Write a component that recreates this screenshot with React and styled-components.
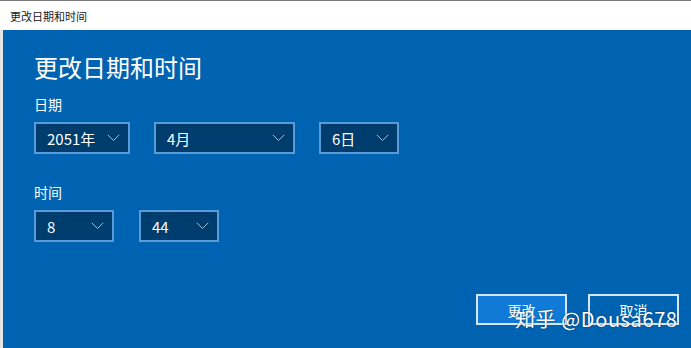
import styled, { createGlobalStyle } from "styled-components"

const GlobalStyle = createGlobalStyle`
    html, body {
        margin: 0;
        padding: 0;
        background: #ffffff;
    }
    body {
        font-family: "Noto Sans CJK SC", "Noto Sans", sans-serif;
    }
`

const Window = styled.div`
    width: 691px;
    height: 348px;
    display: flex;
    flex-direction: column;
    position: relative;
    overflow: hidden;
    border-top: 1px solid #7a7a7a;
    box-sizing: border-box;
`

const TitleBar = styled.div`
    height: 29px;
    display: flex;
    align-items: center;
    padding-left: 10px;
    font-size: 11px;
    color: #1a1a1a;
    background: #ffffff;
`

const Body = styled.div`
    flex: 1;
    display: flex;
    flex-direction: column;
    background: #0063b1;
    border-left: 3px solid #e6e6e6;
    padding: 21px 12px 23px 31px;
    color: #ffffff;
`

const Heading = styled.h1`
    margin: 0;
    font-size: 24px;
    font-weight: 400;
    line-height: 32px;
`

const Label = styled.div`
    font-size: 14px;
    line-height: 20px;
    margin-top: ${p => p.$top}px;
`

const Row = styled.div`
    display: flex;
    gap: ${p => p.$gap}px;
    margin-top: 8px;
`

const Select = styled.div`
    width: ${p => p.$w}px;
    height: 32px;
    box-sizing: border-box;
    border: 2px solid #5a9ad6;
    background: #003d6f;
    display: flex;
    align-items: center;
    justify-content: space-between;
    padding: 0 8px 0 11px;
    font-size: 15px;
    color: #ffffff;
`

const Chevron = () => (
    <svg width="13" height="8" viewBox="0 0 13 8" fill="none">
        <path d="M0.8 0.8 L6.5 6.5 L12.2 0.8" stroke="#9dbfe0" strokeWidth="1" />
    </svg>
)

const Buttons = styled.div`
    margin-top: auto;
    display: flex;
    justify-content: flex-end;
    gap: 21px;
`

const Button = styled.button`
    width: 91px;
    height: 31px;
    box-sizing: border-box;
    border: 2px solid #d4e6f7;
    background: ${p => (p.$primary ? "#117ad6" : "#0063b1")};
    color: #ffffff;
    font-family: inherit;
    font-size: 14px;
    padding: 0;
`

const Watermark = styled.div`
    position: absolute;
    left: 515px;
    top: 303px;
    font-family: "Noto Sans CJK SC", "Noto Sans", sans-serif;
    font-size: 20px;
    color: #ffffff;
    text-shadow: 0 0 2px rgba(0, 0, 0, 0.55);
    letter-spacing: 0.6px;
    white-space: nowrap;
`

const Dropdown = ({ w, value }) => (
    <Select $w={w}>
        <span>{value}</span>
        <Chevron />
    </Select>
)

export default function App() {
    return (
        <Window>
            <GlobalStyle />
            <TitleBar>更改日期和时间</TitleBar>
            <Body>
                <Heading>更改日期和时间</Heading>
                <Label $top={11}>日期</Label>
                <Row $gap={24}>
                    <Dropdown w={96} value="2051年" />
                    <Dropdown w={141} value="4月" />
                    <Dropdown w={80} value="6日" />
                </Row>
                <Label $top={28}>时间</Label>
                <Row $gap={25}>
                    <Dropdown w={80} value="8" />
                    <Dropdown w={80} value="44" />
                </Row>
                <Buttons>
                    <Button $primary>更改</Button>
                    <Button>取消</Button>
                </Buttons>
            </Body>
            <Watermark>知乎 @Dousa678</Watermark>
        </Window>
    )
}
